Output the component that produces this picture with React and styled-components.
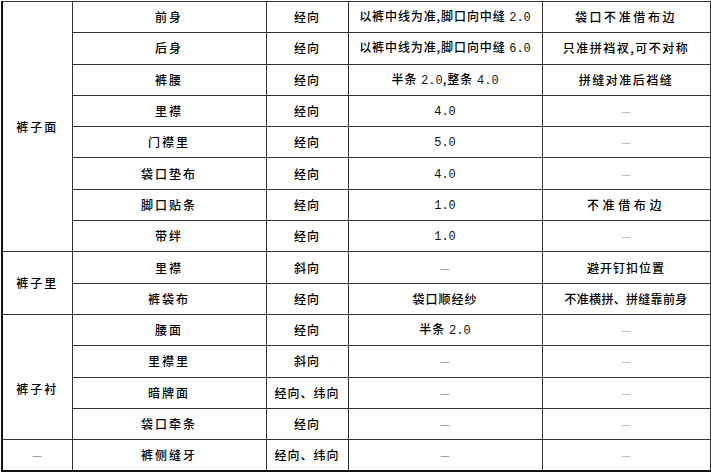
import React from "react";
import styled, { createGlobalStyle } from "styled-components";

const Global = createGlobalStyle`
  html, body { margin: 0; padding: 0; background: #fff; }
  body { font-family: "Noto Sans CJK SC", "Liberation Sans", sans-serif; }
`;

const Page = styled.div`
  width: 711px;
  height: 475px;
  padding: 1px 0 0 1px;
  box-sizing: border-box;
  background: #fff;
`;

const Table = styled.table`
  width: 708px;
  height: 471px;
  border-collapse: collapse;
  table-layout: fixed;
  border-left: 2px solid #111;
  border-bottom: 2px solid #111;
  border-right: 1px solid #222;
  border-top: 1px solid #555;
`;

const Row = styled.tr`
  height: 31px;
`;

const Cell = styled.td`
  border: 1px solid #333;
  padding: 0;
  padding-top: ${(p) => p.$offset || 0}px;
  text-align: center;
  vertical-align: middle;
  font-size: 12px;
  font-weight: 500;
  line-height: 14px;
  color: #000;
  letter-spacing: ${(p) => (p.$spread != null ? p.$spread : 1)}px;
  white-space: nowrap;
  overflow: hidden;
`;

const Num = styled.span`
  font-family: "Liberation Mono", monospace;
  font-size: 12px;
  font-weight: 400;
  letter-spacing: 0;
  color: #111;
`;

const Dash = styled.span`
  color: ${(p) => (p.$faint ? "#b5b5b5" : "#8a8a8a")};
  font-size: 11px;
  font-weight: 400;
  letter-spacing: 0;
`;

function Text({ value, faint }) {
  if (value === "—") return <Dash $faint={faint}>—</Dash>;
  const parts = value.split(/(\d+\.\d+)/);
  return (
    <>
      {parts.map((p, i) =>
        /^\d+\.\d+$/.test(p) ? <Num key={i}>{p}</Num> : <React.Fragment key={i}>{p}</React.Fragment>
      )}
    </>
  );
}

const groups = [
  {
    name: "裤子面",
    rows: [
      ["前身", "经向", "以裤中线为准,脚口向中缝 2.0", "袋口不准借布边", 0.9, 2.6],
      ["后身", "经向", "以裤中线为准,脚口向中缝 6.0", "只准拼裆衩,可不对称", 0.9, 1.5],
      ["裤腰", "经向", "半条 2.0,整条 4.0", "拼缝对准后裆缝", 1, 1.5],
      ["里襟", "经向", "4.0", "—"],
      ["门襟里", "经向", "5.0", "—"],
      ["袋口垫布", "经向", "4.0", "—"],
      ["脚口贴条", "经向", "1.0", "不准借布边", 1, 3.6],
      ["带绊", "经向", "1.0", "—"],
    ],
  },
  {
    name: "裤子里",
    rows: [
      ["里襟", "斜向", "—", "避开钉扣位置", 1, 1],
      ["裤袋布", "经向", "袋口顺经纱", "不准横拼、拼缝靠前身", 1, 0.3],
    ],
  },
  {
    name: "裤子衬",
    offset: 24,
    rows: [
      ["腰面", "经向", "半条 2.0", "—"],
      ["里襟里", "斜向", "—", "—"],
      ["暗牌面", "经向、纬向", "—", "—"],
      ["袋口牵条", "经向", "—", "—"],
    ],
  },
  {
    name: "—",
    rows: [["裤侧缝牙", "经向、纬向", "—", "—"]],
  },
];

export default function App() {
  return (
    <Page>
      <Global />
      <Table>
        <colgroup>
          <col style={{ width: 70 }} />
          <col style={{ width: 194 }} />
          <col style={{ width: 82 }} />
          <col style={{ width: 194 }} />
          <col style={{ width: 168 }} />
        </colgroup>
        <tbody>
          {groups.map((g) =>
            g.rows.map((r, i) => (
              <Row key={g.name + i}>
                {i === 0 && (
                  <Cell rowSpan={g.rows.length} $offset={g.offset} $spread={2}>
                    <Text value={g.name} />
                  </Cell>
                )}
                <Cell $spread={2}>
                  <Text value={r[0]} />
                </Cell>
                <Cell $spread={1}>
                  <Text value={r[1]} />
                </Cell>
                <Cell $spread={r[4]}>
                  <Text value={r[2]} />
                </Cell>
                <Cell $spread={r[5]}>
                  <Text value={r[3]} faint />
                </Cell>
              </Row>
            ))
          )}
        </tbody>
      </Table>
    </Page>
  );
}
